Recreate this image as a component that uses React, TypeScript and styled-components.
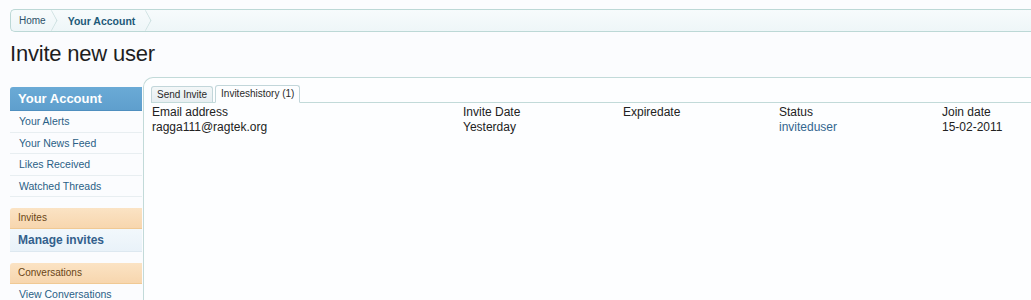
import * as React from "react";
import styled, { createGlobalStyle } from "styled-components";

const GlobalStyle = createGlobalStyle`
  html, body {
    margin: 0;
    padding: 0;
    background: #fbfcfe;
    overflow: hidden;
  }
  body {
    font-family: "Liberation Sans", Arial, sans-serif;
    color: #222;
  }
`;

const Page = styled.div`
  width: 1031px;
  height: 300px;
  padding-left: 10px;
  box-sizing: border-box;
  overflow: hidden;
`;

const Breadcrumb = styled.div`
  margin-top: 9px;
  height: 21px;
  display: flex;
  align-items: stretch;
  border: 1px solid #bcd8d6;
  border-right: none;
  border-radius: 5px 0 0 5px;
  background: linear-gradient(to bottom, #f7fbfc, #eef6f8);
`;

const Crumb = styled.a<{ $strong?: boolean }>`
  position: relative;
  display: flex;
  align-items: center;
  padding: 0 ${(p) => (p.$strong ? "19px" : "14px")} 0 ${(p) => (p.$strong ? "8px" : "8px")};
  font-size: ${(p) => (p.$strong ? "10.5px" : "10px")};
  color: ${(p) => (p.$strong ? "#1d5a78" : "#2c5168")};
  font-weight: ${(p) => (p.$strong ? 700 : 400)};
  text-decoration: none;

  &::after {
    content: "";
    position: absolute;
    right: 1px;
    top: 3px;
    width: 14px;
    height: 14px;
    border-top: 1px solid #c6dcdc;
    border-right: 1px solid #c6dcdc;
    transform: scaleX(0.55) rotate(45deg);
  }
`;

const Title = styled.h1`
  margin: 9px 0 0;
  font-size: 22px;
  font-weight: 400;
  line-height: 26px;
  color: #1e1e1e;
  letter-spacing: -0.2px;
`;

const Body = styled.div`
  display: flex;
  margin-top: 10px;
  align-items: flex-start;
`;

const Sidebar = styled.nav`
  width: 132px;
  flex-shrink: 0;
  margin-top: 10px;
  margin-right: 1px;
`;

const Section = styled.div`
  & + & {
    margin-top: 11px;
  }
`;

const PrimaryHeader = styled.div`
  height: 23px;
  line-height: 23px;
  padding-left: 8px;
  background: linear-gradient(to bottom, #6aaad6, #5f9fcd);
  color: #fff;
  font-weight: 700;
  font-size: 13px;
  border-radius: 3px 0 0 0;
  border-bottom: 1px solid #4f8fbf;
`;

const SubHeader = styled.div`
  height: 20px;
  line-height: 20px;
  padding-left: 8px;
  background: linear-gradient(to bottom, #fbe3c4, #f7d6ae);
  color: #6a4516;
  font-size: 10px;
  border-radius: 3px 0 0 0;
  border-bottom: 1px solid #f0c994;
`;

const NavItem = styled.a`
  display: block;
  height: 20.5px;
  line-height: 20px;
  padding-left: 9px;
  font-size: 10.5px;
  color: #2a5f86;
  text-decoration: none;
  border-bottom: 1px solid #e8eef1;
`;

const ActiveItem = styled.a`
  display: block;
  height: 22px;
  line-height: 22px;
  padding-left: 8px;
  font-size: 12px;
  font-weight: 700;
  color: #33608c;
  text-decoration: none;
  background: linear-gradient(to bottom, #f2f8fc, #e9f2f9);
  border-bottom: 1px solid #dde8f0;
`;

const Panel = styled.section`
  flex: 1;
  min-height: 240px;
  border-top: 1px solid #c2dad9;
  border-left: 1px solid #c2dad9;
  border-radius: 10px 0 0 0;
  background: #fdfeff;
  padding: 8px 0 0 7px;
`;

const TabStrip = styled.div`
  display: flex;
  align-items: flex-end;
  gap: 2px;
  height: 16px;
  border-bottom: 1px solid #c2dad9;
`;

const Tab = styled.div<{ $active?: boolean }>`
  height: ${(p) => (p.$active ? "16px" : "15px")};
  line-height: ${(p) => (p.$active ? "16px" : "15px")};
  padding: 0 5px;
  font-size: 10px;
  color: #2a2a2a;
  background: ${(p) => (p.$active ? "#fdfeff" : "linear-gradient(to bottom, #f3f7f8, #e7eef1)")};
  border: 1px solid #c2d6da;
  border-bottom: ${(p) => (p.$active ? "1px solid #fdfeff" : "none")};
  margin-bottom: ${(p) => (p.$active ? "-1px" : "0")};
  border-radius: 3px 3px 0 0;
`;

const Grid = styled.div`
  display: grid;
  grid-template-columns: 311px 160px 156px 163px 1fr;
  padding-left: 1px;
  margin-top: 2px;
`;

const Cell = styled.div<{ $link?: boolean }>`
  font-size: 12px;
  line-height: 15px;
  color: ${(p) => (p.$link ? "#33668f" : "#222")};
  white-space: nowrap;
`;

const headers = ["Email address", "Invite Date", "Expiredate", "Status", "Join date"];
const rows = [
  { email: "ragga111@ragtek.org", date: "Yesterday", expire: "", status: "inviteduser", join: "15-02-2011" },
];

export default function App() {
  return (
    <>
      <GlobalStyle />
      <Page>
        <Breadcrumb>
          <Crumb href="#">Home</Crumb>
          <Crumb href="#" $strong>
            Your Account
          </Crumb>
        </Breadcrumb>
        <Title>Invite new user</Title>
        <Body>
          <Sidebar>
            <Section>
              <PrimaryHeader>Your Account</PrimaryHeader>
              <NavItem href="#">Your Alerts</NavItem>
              <NavItem href="#">Your News Feed</NavItem>
              <NavItem href="#">Likes Received</NavItem>
              <NavItem href="#">Watched Threads</NavItem>
            </Section>
            <Section>
              <SubHeader>Invites</SubHeader>
              <ActiveItem href="#">Manage invites</ActiveItem>
            </Section>
            <Section>
              <SubHeader>Conversations</SubHeader>
              <NavItem href="#">View Conversations</NavItem>
            </Section>
          </Sidebar>
          <Panel>
            <TabStrip>
              <Tab>Send Invite</Tab>
              <Tab $active>Inviteshistory (1)</Tab>
            </TabStrip>
            <Grid>
              {headers.map((h) => (
                <Cell key={h}>{h}</Cell>
              ))}
              {rows.map((r) => (
                <React.Fragment key={r.email}>
                  <Cell>{r.email}</Cell>
                  <Cell>{r.date}</Cell>
                  <Cell>{r.expire}</Cell>
                  <Cell $link>{r.status}</Cell>
                  <Cell>{r.join}</Cell>
                </React.Fragment>
              ))}
            </Grid>
          </Panel>
        </Body>
      </Page>
    </>
  );
}
